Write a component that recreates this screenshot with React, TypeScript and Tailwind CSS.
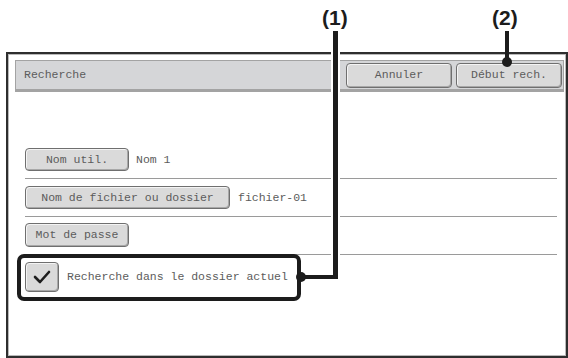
import React from 'react';

const mono = { fontFamily: '"Liberation Mono", "DejaVu Sans Mono", monospace' };

function Btn({ label, className }: { label: string; className: string }) {
  return (
    <div
      className={`flex items-center justify-center rounded-[4px] border border-[#6f6f6f] bg-[#dadada] text-[11.5px] text-[#5c5c5c] shadow-[inset_1px_1px_0_#f4f4f4,inset_-1px_-1px_0_#a8a8a8] ${className}`}
    >
      {label}
    </div>
  );
}

export default function App() {
  return (
    <div className="relative h-[358px] w-[568px] overflow-hidden bg-white" style={mono}>
      <div className="pl-[6px] pt-[52px]">
        <div className="h-[306px] w-[562px] border-2 border-[#2e2e2e] bg-white">
          <div className="h-full w-full border border-[#b9b9b9] pl-[6px] pr-[1px] pt-[5px]">
            {/* title bar */}
            <div className="flex h-[32px] items-center border border-b-[3px] border-[#a3a3a3] bg-[#d5d6d8] pl-[8px] pr-[1px]">
              <span className="text-[11.5px] text-[#5c5c5c]">Recherche</span>
              <div className="ml-auto flex gap-[4px]">
                <Btn label="Annuler" className="h-[25px] w-[106px]" />
                <Btn label="Début rech." className="h-[25px] w-[106px]" />
              </div>
            </div>

            <div className="pl-[10px] pr-[7px]">
              <div className="mt-[56px] flex items-center gap-[7px]">
                <Btn label="Nom util." className="h-[23px] w-[104px]" />
                <span className="text-[11.5px] text-[#5c5c5c]">Nom 1</span>
              </div>
              <div className="mt-[7px] h-px bg-[#9a9a9a]" />

              <div className="mt-[7px] flex items-center gap-[8px]">
                <Btn label="Nom de fichier ou dossier" className="h-[23px] w-[205px]" />
                <span className="text-[11.5px] text-[#5c5c5c]">fichier-01</span>
              </div>
              <div className="mt-[7px] h-px bg-[#9a9a9a]" />

              <div className="mt-[6px] flex items-center">
                <Btn label="Mot de passe" className="h-[24px] w-[104px]" />
              </div>
              <div className="mt-[7px] h-px bg-[#9a9a9a]" />

              <div className="mt-[7px] flex items-center gap-[8px]">
                <div className="flex h-[30px] w-[34px] items-center justify-center rounded-[4px] border border-[#6f6f6f] bg-[#dadada] shadow-[inset_1px_1px_0_#f4f4f4,inset_-1px_-1px_0_#a8a8a8]">
                  <svg width="18" height="14" viewBox="0 0 18 14">
                    <path d="M2 7 L7 12 L16 2" fill="none" stroke="#1e1e1e" strokeWidth="2.6" strokeLinecap="round" strokeLinejoin="round" />
                  </svg>
                </div>
                <span className="text-[11.5px] text-[#5c5c5c]">Recherche dans le dossier actuel</span>
              </div>
            </div>
          </div>
        </div>
      </div>

      {/* annotations */}
      <div className="absolute left-[17px] top-[254px] h-[47px] w-[284px] rounded-[7px] border-4 border-[#1c1c1c]" />

      <div className="absolute left-[322px] top-[7px] text-[21px] font-bold leading-none text-[#1c1c1c]" style={{ fontFamily: '"Liberation Sans", Arial, sans-serif' }}>(1)</div>
      <div className="absolute left-[331px] top-[31px] h-[248px] w-[9px] border-x-2 border-white bg-[#1c1c1c]" />
      <div className="absolute left-[300px] top-[275px] h-[4px] w-[38px] bg-[#1c1c1c]" />
      <div className="absolute left-[296px] top-[272px] h-[10px] w-[10px] rounded-full bg-[#1c1c1c]" />

      <div className="absolute left-[492px] top-[7px] text-[21px] font-bold leading-none text-[#1c1c1c]" style={{ fontFamily: '"Liberation Sans", Arial, sans-serif' }}>(2)</div>
      <div className="absolute left-[505px] top-[31px] h-[30px] w-[4px] bg-[#1c1c1c]" />
      <div className="absolute left-[502px] top-[57px] h-[10px] w-[10px] rounded-full bg-[#1c1c1c]" />
    </div>
  );
}
